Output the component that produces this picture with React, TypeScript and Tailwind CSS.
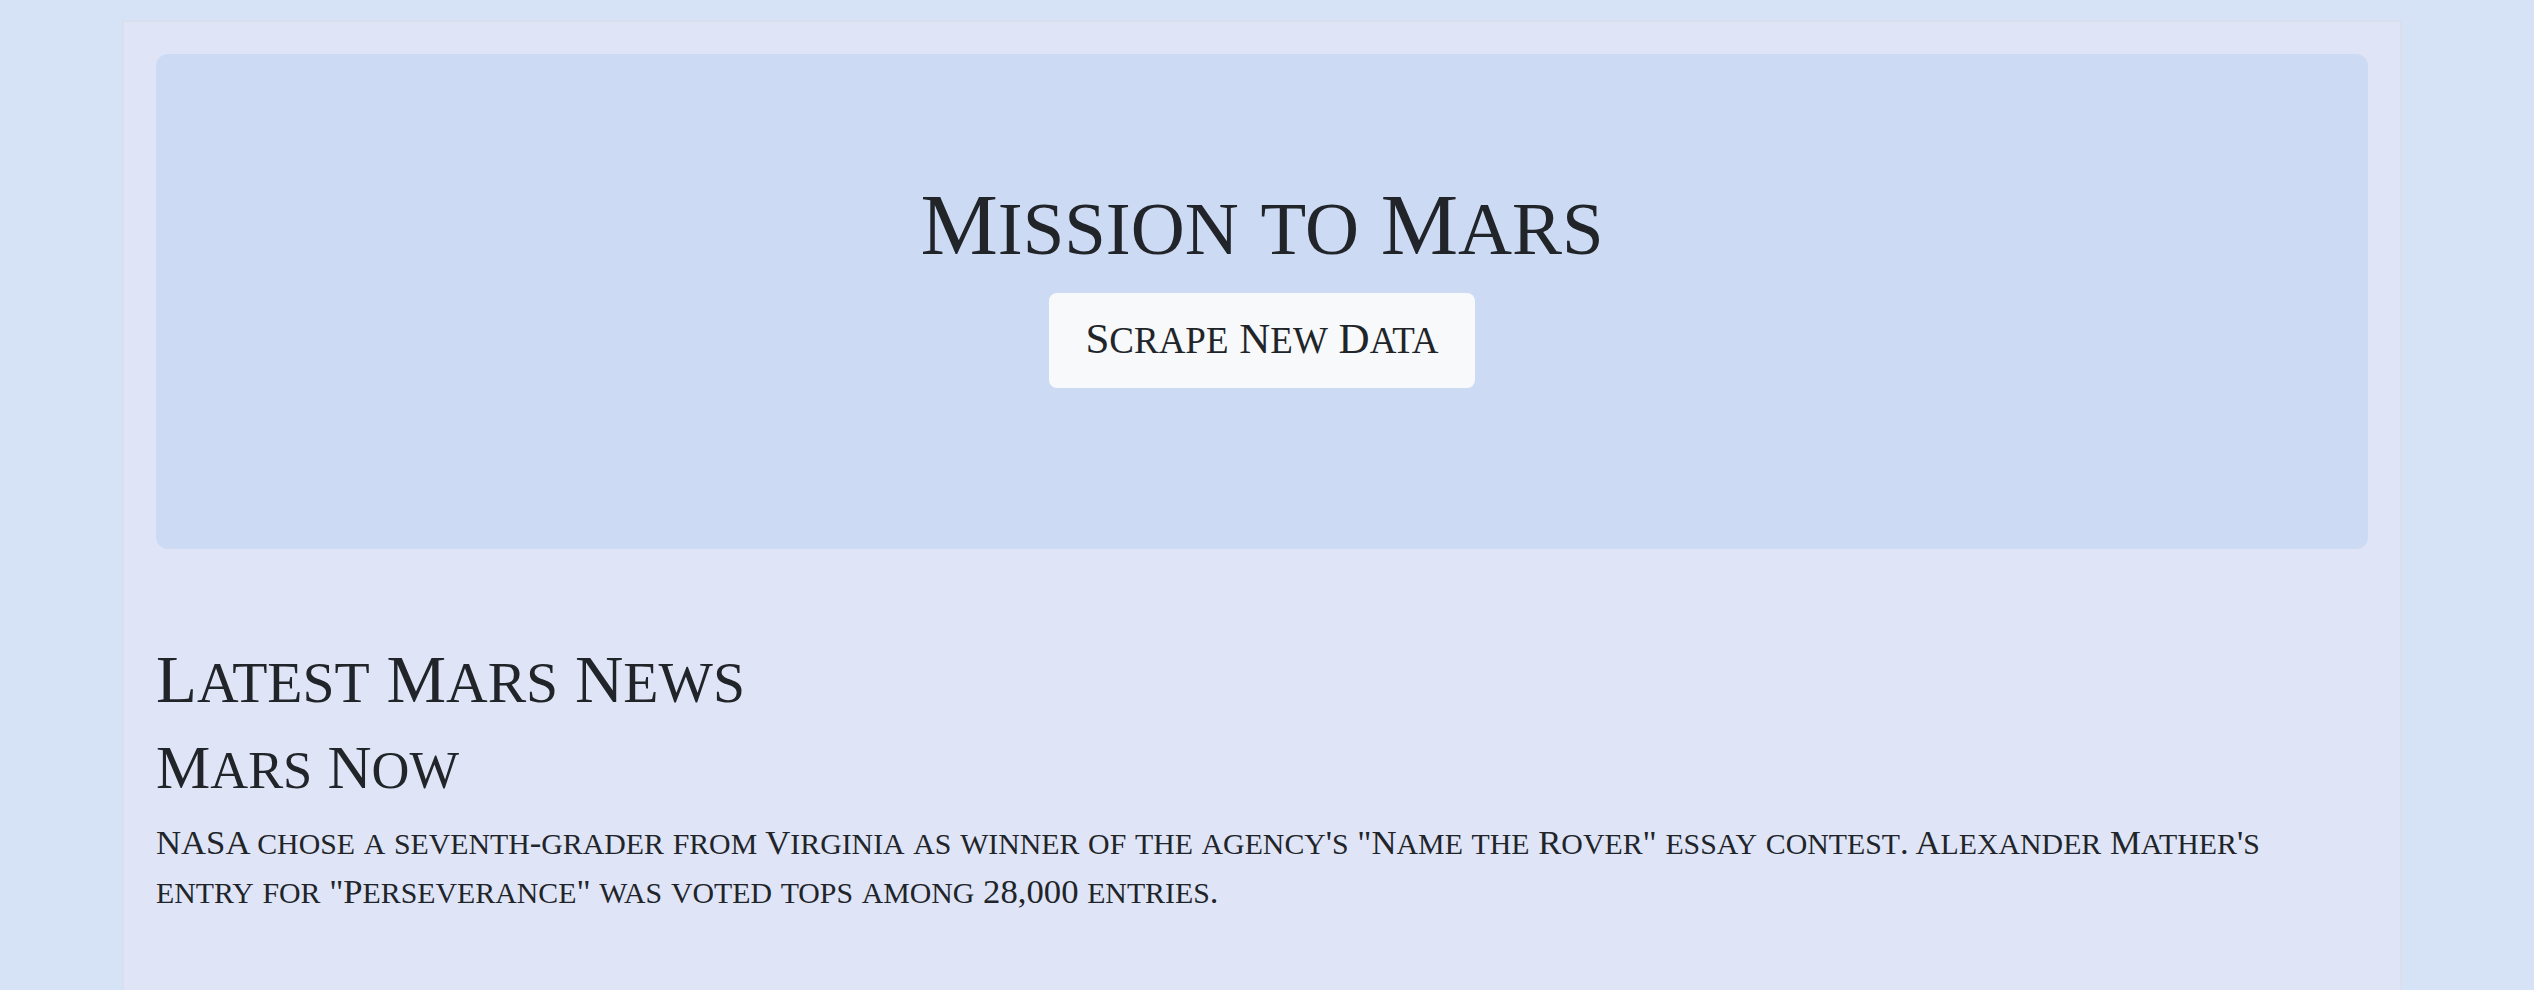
import React from "react";

// Cinzel-style small caps: lowercase runs are shown as slightly smaller capitals
function Caps({ text }: { text: string }) {
  const parts = text.split(/([a-z]+)/);
  return (
    <>
      {parts.map((p, i) =>
        /^[a-z]+$/.test(p) ? (
          <span key={i} className="uppercase text-[0.86em]">
            {p}
          </span>
        ) : (
          <React.Fragment key={i}>{p}</React.Fragment>
        )
      )}
    </>
  );
}

export default function App() {
  return (
    <div className="min-h-screen bg-[#d6e2f6] pt-[20px] font-['Liberation_Serif',serif] text-[#212529]">
      <div className="ml-[122px] w-[2280px] min-h-[990px] border-2 border-[#d9dfec] bg-[#dfe4f7] p-[32px]">
        {/* Jumbotron */}
        <div className="flex flex-col items-center rounded-xl bg-[#ccdaf4] pt-[127px] pb-[161px]">
          <h1 className="text-[87px] leading-none">
            <Caps text="Mission to Mars" />
          </h1>
          <button className="mt-[25px] rounded-lg bg-[#f8f9fa] px-[36px] pt-[24px] pb-[28px] text-[43px] leading-none text-[#212529]">
            <Caps text="Scrape New Data" />
          </button>
        </div>

        {/* News */}
        <section className="mt-[97px]">
          <h2 className="text-[67px] leading-none">
            <Caps text="Latest Mars News" />
          </h2>
          <h3 className="mt-[24px] text-[61px] leading-none">
            <Caps text="Mars Now" />
          </h3>
          <p className="mt-[21px] max-w-[2160px] text-[34.7px] leading-[48px]">
            <Caps text={`NASA chose a seventh-grader from Virginia as winner of the agency's "Name the Rover" essay contest. Alexander Mather's entry for "Perseverance" was voted tops among 28,000 entries.`} />
          </p>
        </section>
      </div>
    </div>
  );
}
